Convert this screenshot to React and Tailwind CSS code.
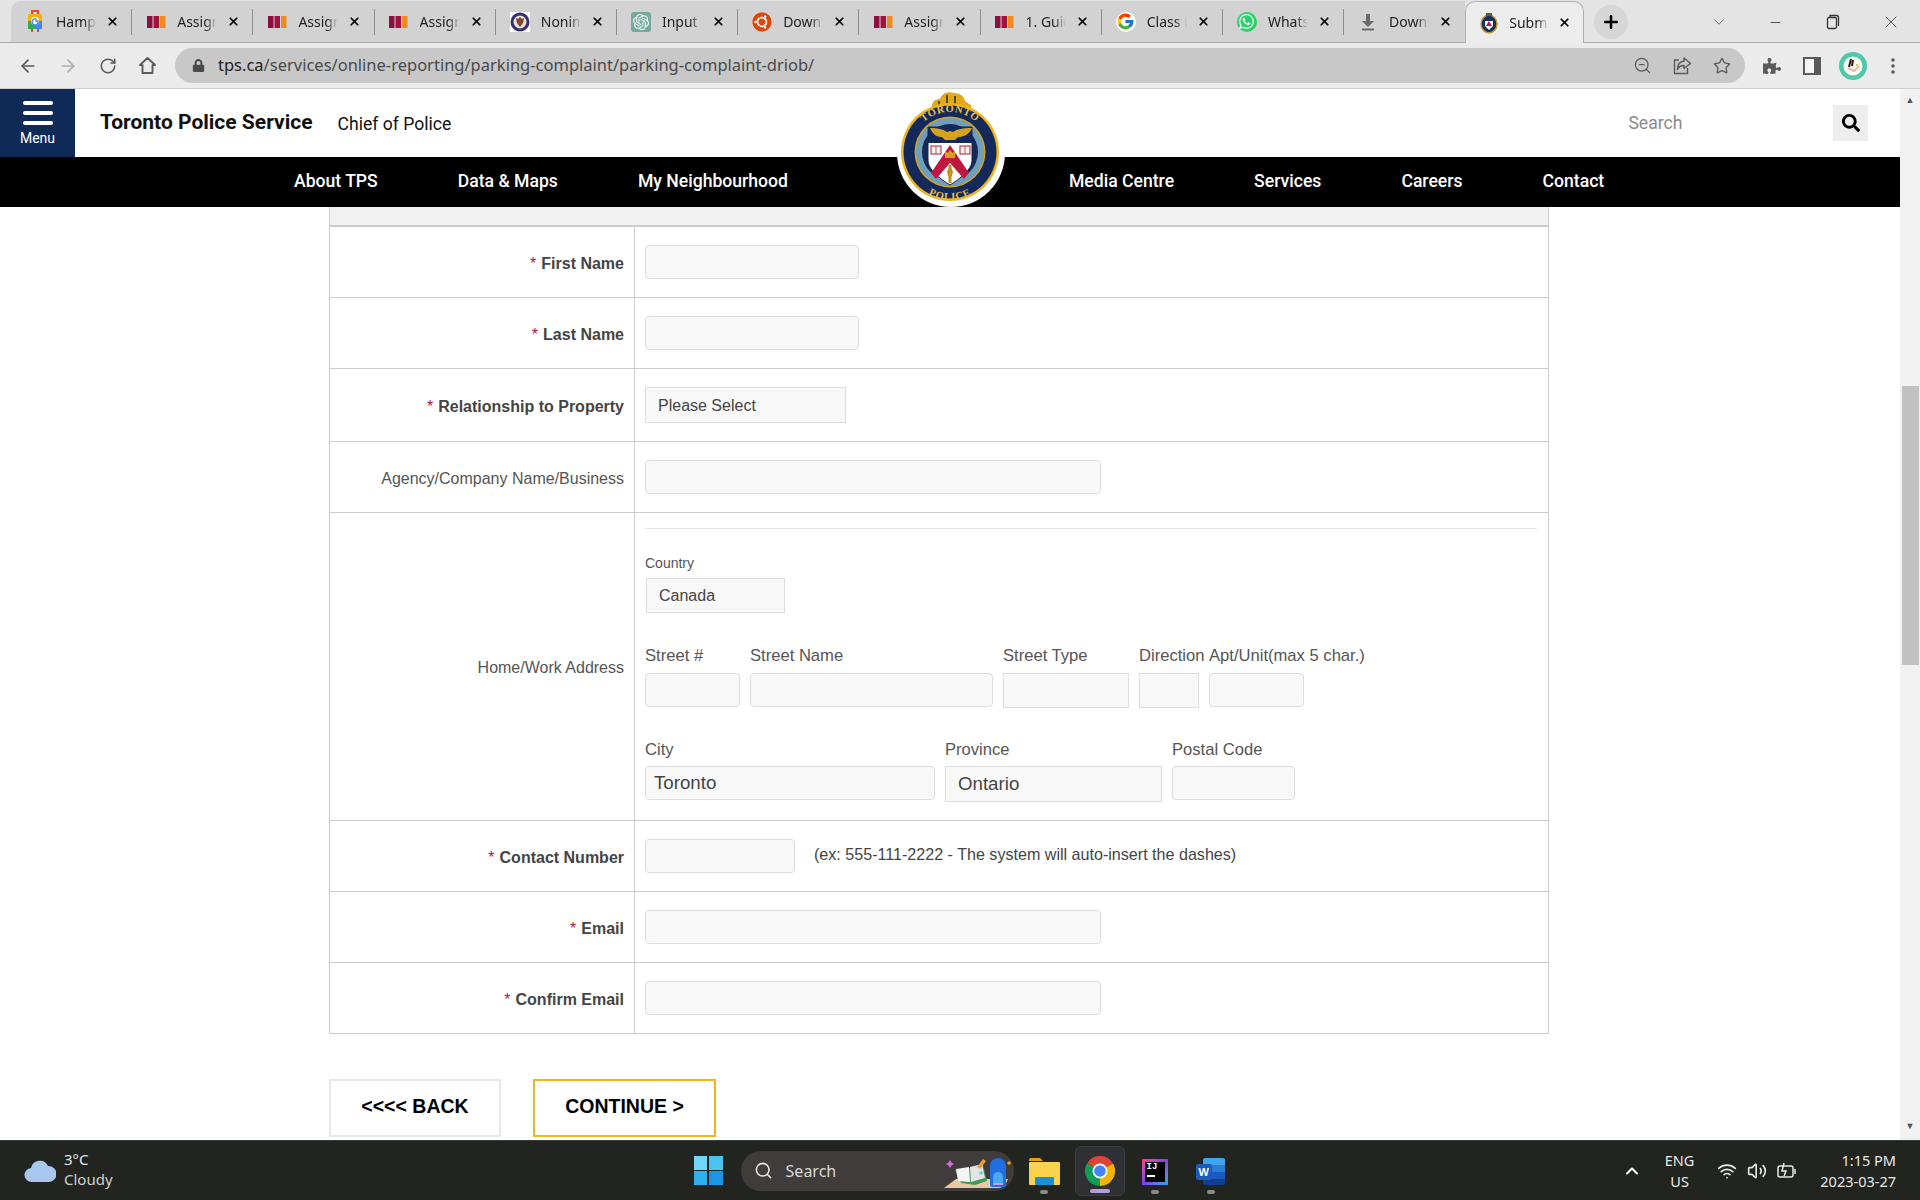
import React from 'react';
import { ArrowLeft, ArrowRight, RotateCw, ZoomOut, Star, X, Plus, ChevronDown, ChevronUp, Minus, Search, Wifi, Volume2 } from 'lucide-react';
import { FaUbuntu, FaWhatsapp, FaPuzzlePiece, FaSearch, FaLock } from 'react-icons/fa';
import { FcGoogle } from 'react-icons/fc';
import { SiOpenai } from 'react-icons/si';

const Bars = () => (
  <svg width="19" height="12" viewBox="0 0 19 12">
    <rect x="0" y="0" width="5.5" height="12" fill="#8e0f3f" />
    <rect x="6.5" y="0" width="5.5" height="12" fill="#a3123f" />
    <rect x="13" y="0" width="5.5" height="12" fill="#f08a1d" />
  </svg>
);

const MapsIcon = () => (
  <svg width="14" height="24" viewBox="0 0 14 24">
    <path d="M4 4V1h6v3" fill="none" stroke="#e8453c" strokeWidth="2" />
    <rect x="0" y="4" width="14" height="8" rx="2" fill="#f4b400" />
    <rect x="0" y="11" width="7" height="8" fill="#34a853" />
    <rect x="7" y="11" width="7" height="8" fill="#4285f4" />
    <rect x="3" y="19" width="2" height="3" fill="#e8453c" />
    <rect x="9" y="19" width="2" height="3" fill="#e8453c" />
    <circle cx="7" cy="11" r="4" fill="#fff" />
    <path d="M9 9.5A3 3 0 1 0 10 11H7.2" fill="none" stroke="#4285f4" strokeWidth="1.3" />
  </svg>
);

const SealIcon = () => (
  <svg width="20" height="20" viewBox="0 0 20 20">
    <rect width="20" height="20" fill="#fff" />
    <circle cx="10" cy="10" r="9.5" fill="#3a2d73" />
    <circle cx="10" cy="10" r="6.5" fill="#e9e4d4" />
    <path d="M10 5l2 2 2-1-1 5-3 4-3-4-1-5 2 1z" fill="#6b4a2a" />
    <rect x="8.5" y="8" width="3" height="4" fill="#b8323f" />
  </svg>
);

const MiniCrest = () => (
  <svg width="18" height="22" viewBox="0 0 18 22">
    <ellipse cx="9" cy="12" rx="8" ry="9" fill="#17305f" stroke="#c49a3c" strokeWidth="1.5" />
    <rect x="6" y="1" width="6" height="3" fill="#6b5a2a" />
    <path d="M5 9h8v5l-4 4-4-4z" fill="#fff" />
    <path d="M9 9l3 5H6z" fill="#b8163f" />
  </svg>
);

const DownloadTab = () => (
  <svg width="16" height="18" viewBox="0 0 16 18" fill="#6a6a6a">
    <path d="M6 1h4v7h4l-6 6-6-6h4z" />
    <rect x="2" y="15.5" width="12" height="2" />
  </svg>
);

const tabs = [
  { title: 'Hampton', icon: <MapsIcon /> },
  { title: 'Assignment', icon: <Bars /> },
  { title: 'Assignment', icon: <Bars /> },
  { title: 'Assignment', icon: <Bars /> },
  { title: 'Nonimmigrant', icon: <SealIcon /> },
  { title: 'Input Data', icon: <span className="flex h-[20px] w-[20px] items-center justify-center rounded-[3px] bg-[#74aa9c] text-white"><SiOpenai size={16} /></span> },
  { title: 'Download', icon: <span className="flex h-[20px] w-[20px] items-center justify-center rounded-full bg-white text-[#d9480f]"><FaUbuntu size={20} /></span> },
  { title: 'Assignment', icon: <Bars /> },
  { title: '1. Guide', icon: <Bars /> },
  { title: 'Class Lists', icon: <span className="flex h-[20px] w-[20px] items-center justify-center rounded-full bg-white"><FcGoogle size={19} /></span> },
  { title: 'WhatsApp', icon: <span className="flex h-[20px] w-[20px] items-center justify-center rounded-full bg-[#25d366] text-white"><FaWhatsapp size={17} /></span> },
  { title: 'Downloads', icon: <DownloadTab /> },
];

const tabText = "w-[40px] shrink-0 overflow-hidden whitespace-nowrap [mask-image:linear-gradient(to_right,black_70%,transparent)]";

const TabStrip = () => (
  <div className="flex h-[43px] items-end border-b border-[#a8a8a8] bg-[#e4e4e4] pl-[11px] font-['Noto_Sans',sans-serif] text-[14px] text-[#222]">
    {tabs.map((t, i) => (
      <div key={i} className={`flex h-[41px] w-[121.2px] items-center bg-[#d2d2d2] ${i === 0 ? 'rounded-tl-[10px]' : ''}`}>
        <span className="flex w-[45px] shrink-0 justify-center pl-[3px]">{t.icon}</span>
        <span className={tabText}>{t.title}</span>
        <X size={13} strokeWidth={3.2} className="ml-[10px] shrink-0 text-black" />
        {i !== 11 && <span className="ml-auto h-[26px] w-px bg-[#8f8f8f]" />}
      </div>
    ))}
    <div className="-mb-px flex h-[42px] w-[119px] items-center rounded-t-[10px] border border-b-0 border-[#b0b0b0] bg-[#ececec]">
      <span className="flex w-[43px] shrink-0 justify-center pl-[2px]"><MiniCrest /></span>
      <span className={tabText}>Submit</span>
      <X size={13} strokeWidth={3.2} className="ml-[9px] shrink-0 text-black" />
    </div>
    <div className="mb-[3px] ml-[10px] flex h-[34px] w-[34px] items-center justify-center rounded-full bg-[#d6d6d6]">
      <Plus size={20} strokeWidth={3} className="text-black" />
    </div>
    <div className="mb-[3px] flex h-[34px] items-center text-[#444]">
      <ChevronDown size={18} strokeWidth={1} className="ml-[82px]" />
      <Minus size={15} strokeWidth={1.5} className="ml-[40px]" />
      <svg width="14" height="16" viewBox="0 0 14 16" className="ml-[43px]" fill="none" stroke="#333" strokeWidth="1.3">
        <rect x="1.5" y="3.5" width="9" height="11" rx="1.5" />
        <path d="M4 3V1.5h6.5a2 2 0 0 1 2 2V12" />
      </svg>
      <X size={20} strokeWidth={1} className="ml-[41px]" />
    </div>
  </div>
);

const Toolbar = () => (
  <div className="flex h-[46px] items-center border-b border-[#cfcfcf] bg-[#ebebeb] text-[#5a5a5a]">
    <ArrowLeft size={20} className="ml-[18px]" />
    <ArrowRight size={20} className="ml-[20px] text-[#b0b0b0]" />
    <RotateCw size={18} className="ml-[21px]" />
    <svg width="19" height="19" viewBox="0 0 19 19" className="ml-[21px]" fill="none" stroke="#5a5a5a" strokeWidth="1.9" strokeLinejoin="round">
      <path d="M9.5 2L2 9h2.5v8h10V9H17z" />
    </svg>
    <div className="ml-[18px] flex h-[35px] w-[1570px] items-center rounded-full bg-[#c8c8c8] pl-[17px]">
      <FaLock size={13} className="text-[#4a4a4a]" />
      <span className="ml-[13px] font-['Noto_Sans',sans-serif] text-[16.5px] text-[#4a4a4a]"><span className="text-[#222]">tps.ca</span>/services/online-reporting/parking-complaint/parking-complaint-driob/</span>
      <ZoomOut size={19} strokeWidth={1.6} className="ml-[819px]" />
      <svg width="19" height="19" viewBox="0 0 19 19" className="ml-[21px]" fill="none" stroke="#5a5a5a" strokeWidth="1.4" strokeLinejoin="round">
        <path d="M6 4H1.5v13.5h13V12" />
        <path d="M11 2l6.5 5.5L11 12.5V9.5c-3.5 0-5.5 1.500-6.500 4 0-5 2.500-8 6.500-8.500z" />
      </svg>
      <Star size={18} strokeWidth={1.8} className="ml-[21px]" />
    </div>
    <FaPuzzlePiece size={18} className="ml-[18px] text-[#5a5a5a]" />
    <svg width="18" height="18" viewBox="0 0 18 18" className="ml-[22px]">
      <rect x="1" y="1" width="16" height="16" fill="#f4f4f4" stroke="#5a5a5a" strokeWidth="2" />
      <rect x="11" y="1" width="6" height="16" fill="#5a5a5a" />
    </svg>
    <div className="ml-[18px] flex h-[28px] w-[28px] items-center justify-center rounded-full bg-[#4fc9a8]">
      <svg width="20" height="20" viewBox="0 0 20 20">
        <circle cx="10" cy="10" r="9.500" fill="#fdfbf0" />
        <path d="M8 3l-2 8M10 4l-1 6" stroke="#222" strokeWidth="2" fill="none" />
        <path d="M5 12l6 3 5-5" stroke="#f2a0b0" strokeWidth="1.5" fill="none" />
        <circle cx="14" cy="9" r="1.200" fill="#e8c33a" />
      </svg>
    </div>
    <svg width="4" height="18" viewBox="0 0 4 18" className="ml-[24px]">
      <circle cx="2" cy="3" r="1.800" fill="#5a5a5a" />
      <circle cx="2" cy="9" r="1.800" fill="#5a5a5a" />
      <circle cx="2" cy="15" r="1.800" fill="#5a5a5a" />
    </svg>
  </div>
);

// police crest that overlaps the header and nav bar
const Crest = () => (
  <svg width="112" height="120" viewBox="0 0 112 120" className="absolute left-[895px] top-0">
    <defs>
      <path id="crestTop" d="M16 62a39 39 0 0 1 78 0" />
      <path id="crestBottom" d="M10 66a45 45 0 0 0 90 0" />
    </defs>
    <circle cx="56" cy="64" r="54" fill="#fff" />
    <path d="M37 20c-1-6 2-10 8-10 2-6 8-8 14-6 6 0 10 3 11 8l7 5-4 5H38z" fill="#e0a91c" />
    <path d="M44 18v-6M52 18V6M60 18V7" stroke="#3a3320" strokeWidth="1.600" />
    <circle cx="55" cy="63" r="49" fill="#f0b41c" />
    <circle cx="55" cy="63" r="46.500" fill="#12295a" />
    <circle cx="55" cy="63" r="35.500" fill="#d9a21b" />
    <circle cx="55" cy="63" r="34" fill="#6f9fbb" />
    <circle cx="55" cy="63" r="28" fill="#12295a" />
    <text fontFamily="Liberation Serif, serif" fontSize="10.500" fill="#e9bd4a" fontWeight="700" letterSpacing="0.600">
      <textPath href="#crestTop" startOffset="50%" textAnchor="middle">TORONTO</textPath>
    </text>
    <text fontFamily="Liberation Serif, serif" fontSize="10.500" fill="#e9bd4a" fontWeight="700" letterSpacing="0.800">
      <textPath href="#crestBottom" startOffset="50%" textAnchor="middle">POLICE</textPath>
    </text>
    <path d="M33 38h44v34c0 8-12 18-22 24-10-6-22-16-22-24z" fill="#fff" stroke="#12295a" />
    <path d="M33 38h44v16H33z" fill="#12295a" />
    <path d="M35 39c7 0 13 1 17 4l3-1 3 1c4-3 10-4 19-4-3 7-9 9-14 9l-3 3h-10l-3-3c-5 0-9-2-12-9z" fill="#d9a21b" />
    <path d="M55 56L36 84l5 6 14-16 14 16 5-6z" fill="#c0173f" />
    <path d="M50 62l2.500 2 2.500-3 2.500 3 2.500-2v7H50z" fill="#d9a21b" />
    <path d="M53.500 76h3v3l1.500 4-1.500 5v6h-3v-6l-1.500-5 1.500-4z" fill="#c69019" />
    <rect x="36" y="57" width="10" height="8" fill="#f7f2e6" stroke="#a0233f" strokeWidth="1" />
    <rect x="65" y="57" width="10" height="8" fill="#f7f2e6" stroke="#a0233f" strokeWidth="1" />
    <path d="M41 57v8M70 57v8" stroke="#a0233f" strokeWidth="0.700" />
  </svg>
);

const Header = () => (
  <div className="flex h-[68px] items-center bg-white font-['Roboto',sans-serif]">
    <div className="flex h-full w-[75px] flex-col items-center bg-[#0f2a57] pt-[12px] text-white">
      <div className="h-[4px] w-[30px] rounded-full bg-white" />
      <div className="mt-[6px] h-[4px] w-[30px] rounded-full bg-white" />
      <div className="mt-[6px] h-[4px] w-[30px] rounded-full bg-white" />
      <div className="mt-[5px] text-[14px] leading-[17px]">Menu</div>
    </div>
    <div className="ml-[25px] text-[21px] font-bold text-[#111]">Toronto Police Service</div>
    <div className="ml-[25px] mt-[3px] text-[17.600px] text-[#111]">Chief of Police</div>
    <div className="ml-[1177px] text-[17.600px] text-[#8a8a8a]">Search</div>
    <div className="ml-[151px] flex h-[36px] w-[35px] items-center justify-center bg-[#eeeeee]">
      <FaSearch size={18} className="text-black" />
    </div>
  </div>
);

const Nav = () => (
  <div className="flex h-[50px] items-center gap-[80px] bg-black pb-[1px] pl-[294px] font-['Roboto',sans-serif] text-[17.600px] font-medium text-white">
    <span>About TPS</span>
    <span>Data &amp; Maps</span>
    <span>My Neighbourhood</span>
    <span className="w-[121px]" />
    <span>Media Centre</span>
    <span>Services</span>
    <span>Careers</span>
    <span>Contact</span>
  </div>
);

const inputCls = 'h-[34px] rounded-[4px] border border-[#dddddd] bg-[#f8f8f8]';
const selectCls = 'border border-[#dddddd] bg-[#f8f8f8]';

const Row = ({ height, label, required, children }) => (
  <div className={`grid grid-cols-[305px_1fr] border-b border-[#cccccc] ${height}`}>
    <div className={`flex items-center justify-end border-r border-[#cccccc] pr-[10px] pt-[3px] text-right ${required ? 'font-bold text-[#444]' : 'text-[#555]'}`}>
      {required && <span className="mr-[5px] font-normal text-[#b0153f]">*</span>}
      {label}
    </div>
    {children}
  </div>
);

const Cell = ({ children }) => <div className="flex items-center pl-[10px]">{children}</div>;

const Label = ({ children, className = 'text-[16.600px]' }) => <div className={`whitespace-nowrap leading-[20px] ${className}`}>{children}</div>;

const AddressCell = () => (
  <div className="pl-[10px] pt-[15px] text-[#555]">
    <div className="h-px w-[892px] bg-[#e5e5e5]" />
    <Label className="mt-[24px] text-[14px]">Country</Label>
    <div className={`${selectCls} ml-px mt-[5px] flex h-[35px] w-[139px] items-center pl-[12px] text-[#444]`}>Canada</div>
    <div className="mt-[33px] flex gap-[10px]">
      <div className="w-[95px]"><Label>Street #</Label><div className={`${inputCls} mt-[7px]`} /></div>
      <div className="w-[243px]"><Label>Street Name</Label><div className={`${inputCls} mt-[7px]`} /></div>
      <div className="w-[126px]"><Label>Street Type</Label><div className={`${selectCls} mt-[7px] h-[35px]`} /></div>
      <div className="w-[60px]"><Label>Direction</Label><div className={`${selectCls} mt-[7px] h-[35px]`} /></div>
      <div className="w-[95px]"><Label>Apt/Unit(max 5 char.)</Label><div className={`${inputCls} mt-[7px]`} /></div>
    </div>
    <div className="mt-[32px] flex gap-[10px]">
      <div className="w-[290px]"><Label>City</Label><div className={`${inputCls} mt-[6px] pl-[8px] text-[18.700px] leading-[31px] text-[#444]`}>Toronto</div></div>
      <div className="w-[217px]"><Label>Province</Label><div className={`${selectCls} mt-[6px] flex h-[36px] items-center pl-[12px] text-[18.700px] text-[#444]`}>Ontario</div></div>
      <div className="w-[123px]"><Label>Postal Code</Label><div className={`${inputCls} mt-[6px]`} /></div>
    </div>
  </div>
);

const Form = () => (
  <div className="ml-[329px] w-[1220px] font-['Liberation_Sans',sans-serif] text-[16px]">
    <div className="border-x border-[#cccccc]">
      <div className="h-[20px] border-b-2 border-[#cccccc] bg-[#f2f1f2]" />
      <Row height="h-[71px]" label="First Name" required><Cell><div className={`${inputCls} w-[214px]`} /></Cell></Row>
      <Row height="h-[71px]" label="Last Name" required><Cell><div className={`${inputCls} w-[214px]`} /></Cell></Row>
      <Row height="h-[73px]" label="Relationship to Property" required><Cell><div className={`${selectCls} flex h-[36px] w-[201px] items-center pl-[12px] pt-[1px] text-[#444]`}>Please Select</div></Cell></Row>
      <Row height="h-[71px]" label="Agency/Company Name/Business"><Cell><div className={`${inputCls} w-[456px]`} /></Cell></Row>
      <Row height="h-[308px]" label="Home/Work Address"><AddressCell /></Row>
      <Row height="h-[71px]" label="Contact Number" required>
        <Cell>
          <div className={`${inputCls} w-[150px]`} />
          <span className="mb-[3px] ml-[19px] text-[16.100px] text-[#444]">(ex: 555-111-2222 - The system will auto-insert the dashes)</span>
        </Cell>
      </Row>
      <Row height="h-[71px]" label="Email" required><Cell><div className={`${inputCls} w-[456px]`} /></Cell></Row>
      <Row height="h-[71px]" label="Confirm Email" required><Cell><div className={`${inputCls} w-[456px]`} /></Cell></Row>
    </div>
    <div className="mt-[45px] flex gap-[32px] text-[19.500px] font-bold text-black">
      <div className="flex h-[58px] w-[172px] items-center justify-center border-2 border-[#e8e8e8] bg-white pb-[2px]">&lt;&lt;&lt;&lt; BACK</div>
      <div className="flex h-[58px] w-[183px] items-center justify-center border-2 border-[#f0b41c] bg-white pb-[2px]">CONTINUE &gt;</div>
    </div>
  </div>
);

const Scrollbar = () => (
  <div className="flex w-[20px] shrink-0 flex-col items-center bg-[#f1f1f1] text-[9px] leading-none text-[#505050]">
    <span className="mt-[6px]">▲</span>
    <div className="mt-[282px] h-[279px] w-[17px] bg-[#c1c1c1]" />
    <span className="mt-[456px]">▼</span>
  </div>
);

const Dot = () => <div className="mx-auto mt-[5px] h-[4px] w-[8px] rounded-full bg-[#8a8a8a]" />;

const SearchArt = () => (
  <svg width="70" height="40" viewBox="0 0 70 40" className="ml-[105px] shrink-0">
    <path d="M6 9l1.500 2.500L10 13l-2.500 1.500L6 17l-1.500-2.500L2 13l2.500-1.500z" fill="#d46be0" />
    <path d="M0 37l12-9h52l-3 6c-2 2-4 3-7 3z" fill="#e9c9a0" />
    <path d="M11 19l14-2 14-3 4 16-12 4-14-2z" fill="#3f9b5a" />
    <path d="M12 18l13-2 1 15-12-1z" fill="#f4f4f4" />
    <path d="M26 16l12-3 3 14-14 4z" fill="#e4e4e4" />
    <path d="M33 16l6-8 3 2-6 8z" fill="#ef9a3a" />
    <circle cx="37" cy="22" r="1.800" fill="#5fd0d8" />
    <path d="M46 15c0-5 4-8 8-8s8 3 8 8v19c0 1-1 2-2 2H48c-1 0-2-1-2-2z" fill="#1f6fe0" />
    <path d="M49 27c0-4 2-6 5-6s5 2 5 6v5H49z" fill="#48a8f0" />
    <rect x="49" y="32" width="10" height="2" fill="#c79be8" />
    <circle cx="65" cy="12" r="1.800" fill="#f0a020" />
  </svg>
);

const Taskbar = () => (
  <div className="flex h-[60px] items-center border-t border-[#3a3a3a] bg-[#21241f] font-['Noto_Sans',sans-serif] text-[#e8e8e8]">
    <svg width="32" height="24" viewBox="0 0 32 24" className="ml-[24px]">
      <path d="M8 23a7 7 0 0 1-1-14 9 9 0 0 1 17-2 8 8 0 0 1 1 16z" fill="#a9c6ee" />
    </svg>
    <div className="mb-[3px] ml-[8px] text-[15px] leading-[20px]">
      <div>3°C</div>
      <div className="text-[#d0d0d0]">Cloudy</div>
    </div>
    <div className="ml-[581px] grid h-[29px] w-[29px] grid-cols-2 gap-[1.500px]">
      <div className="bg-[#6fd6f7]" /><div className="bg-[#4cc2f1]" /><div className="bg-[#2fb0ee]" /><div className="bg-[#1b96e6]" />
    </div>
    <div className="ml-[18px] flex h-[40px] w-[273px] items-center overflow-hidden rounded-full bg-[#3f3c3b] pl-[13px]">
      <Search size={19} className="shrink-0 text-[#e8e8e8]" />
      <span className="ml-[13px] w-[53px] shrink-0 text-[16px] text-[#d8d8d8]">Search</span>
      <SearchArt />
    </div>
    <div className="ml-[15px] w-[31px]">
      <svg width="31" height="27" viewBox="0 0 31 27" className="mt-[11px]">
        <path d="M0 2a2 2 0 0 1 2-2h9l3 3h-14z" fill="#e0a318" />
        <rect x="0" y="4" width="31" height="23" rx="1" fill="#fbd24c" />
        <rect x="6" y="19" width="19" height="8" rx="1" fill="#1b8fd8" />
      </svg>
      <Dot />
    </div>
    <div className="ml-[15px] flex h-[50px] w-[50px] flex-col items-center rounded-[6px] border border-[#3c3f42] bg-[#2e3033] pt-[9px]">
      <svg width="30" height="30" viewBox="0 0 30 30">
        <path d="M15 15L2 7.500A15 15 0 0 1 28 7.500z" fill="#db4437" />
        <path d="M15 15L28 7.500A15 15 0 0 1 15 30z" fill="#f4b400" />
        <path d="M15 15L15 30A15 15 0 0 1 2 7.500z" fill="#0f9d58" />
        <circle cx="15" cy="15" r="7.500" fill="#fff" />
        <circle cx="15" cy="15" r="5.800" fill="#4285f4" />
      </svg>
      <div className="mt-[3px] h-[4px] w-[20px] rounded-full bg-[#b79fd8]" />
    </div>
    <div className="ml-[17px] w-[26px]">
      <div className="mt-[11px] h-[26px] w-[26px] bg-gradient-to-br from-[#ff2d8a] via-[#7a3df0] to-[#18a0f0] p-[3px]">
        <div className="flex h-full w-full flex-col bg-black px-[2px] font-['Liberation_Mono',monospace] text-[9px] font-bold leading-[10px] text-white">
          <span>IJ</span>
          <span className="mt-[3px] h-[2px] w-[8px] bg-white" />
        </div>
      </div>
      <Dot />
    </div>
    <div className="ml-[28px] w-[30px]">
      <div className="relative mt-[11px] h-[27px] w-[30px]">
        <div className="ml-[7px] flex h-[27px] w-[22px] flex-col overflow-hidden rounded-[2px]">
          <div className="h-[7px] bg-[#41a5ee]" />
          <div className="h-[7px] bg-[#2b7cd3]" />
          <div className="h-[7px] bg-[#185abd]" />
          <div className="h-[6px] bg-[#103f91]" />
        </div>
        <div className="absolute left-0 top-[6px] flex h-[16px] w-[16px] items-center justify-center rounded-[2px] bg-[#185abd] font-['Liberation_Sans',sans-serif] text-[11px] font-bold text-white">W</div>
      </div>
      <Dot />
    </div>
    <ChevronUp size={20} strokeWidth={2.400} className="ml-[396px] text-white" />
    <div className="ml-[19px] w-[38px] text-center text-[14.500px] leading-[21px]">
      <div>ENG</div>
      <div>US</div>
    </div>
    <Wifi size={20} className="ml-[18px]" />
    <Volume2 size={20} className="ml-[10px]" />
    <svg width="20" height="20" viewBox="0 0 20 20" className="ml-[10px]" fill="none" stroke="#e8e8e8" strokeWidth="1.500">
      <rect x="1" y="5" width="15" height="11" rx="2" />
      <path d="M18 8v5" />
      <path d="M7 2L5 10h4l-2 5" />
    </svg>
    <div className="ml-auto mr-[24px] text-right text-[14.500px] leading-[21px]">
      <div>1:15 PM</div>
      <div>2023-03-27</div>
    </div>
  </div>
);

export default function App() {
  return (
    <div className="flex h-[1200px] w-[1920px] flex-col overflow-hidden bg-white">
      <TabStrip />
      <Toolbar />
      <div className="flex h-[1051px]">
        <div className="relative w-[1900px] overflow-hidden">
          <Header />
          <Nav />
          <Crest />
          <Form />
        </div>
        <Scrollbar />
      </div>
      <Taskbar />
    </div>
  );
}
